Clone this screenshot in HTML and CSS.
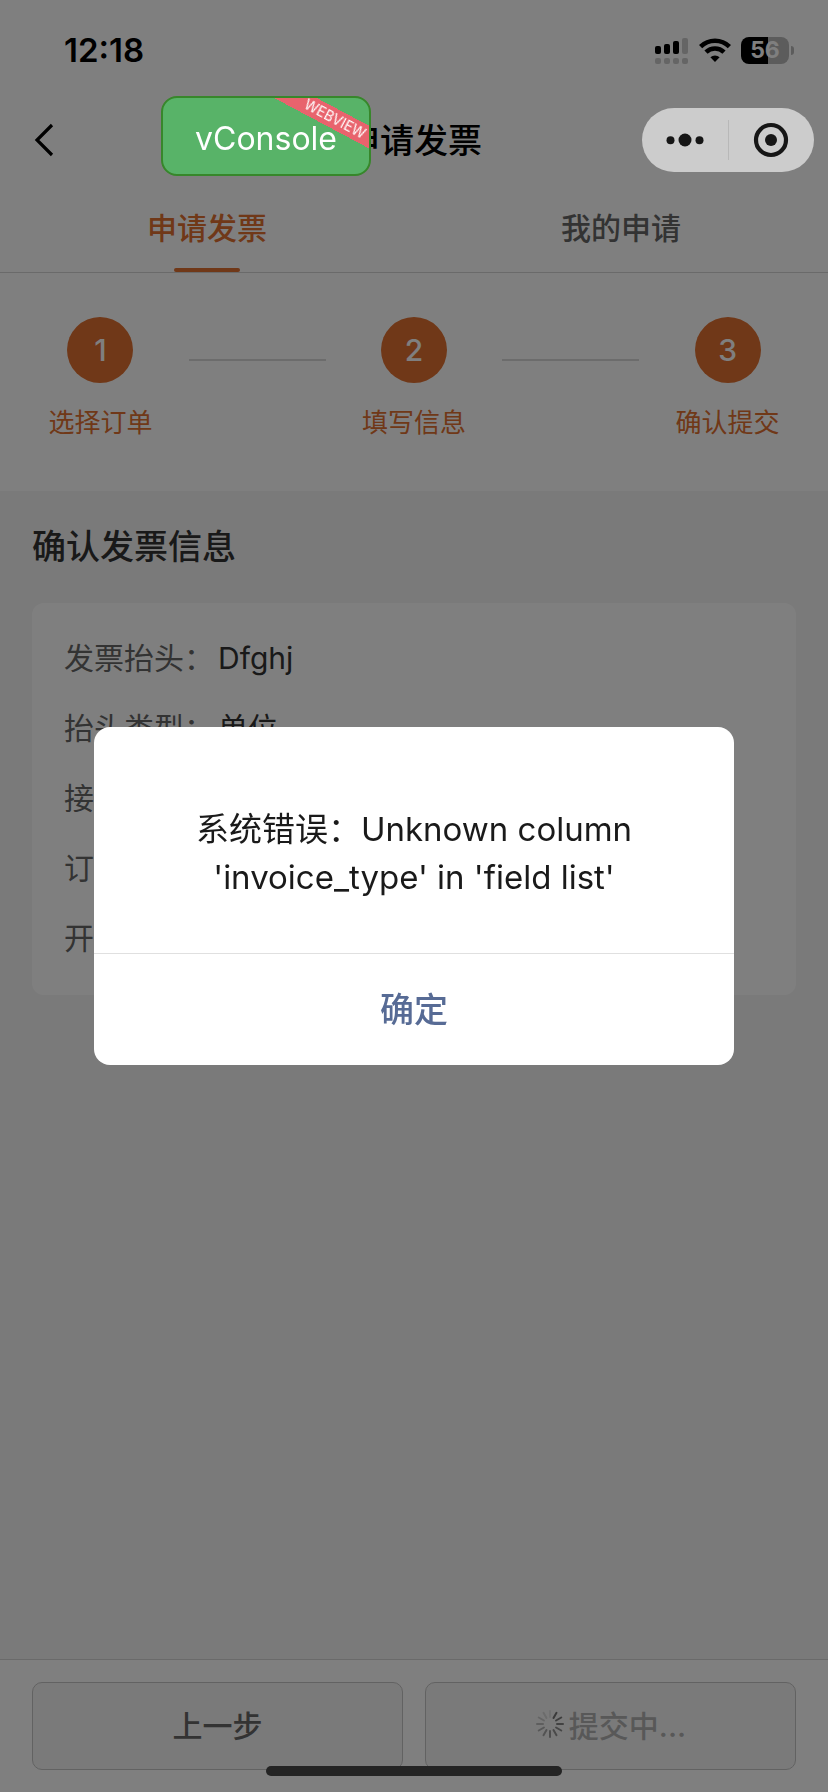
FILE: index.html
```html
<!DOCTYPE html>
<html lang="zh-CN">
<head>
    <meta charset="UTF-8">
    <meta name="viewport" content="width=device-width, initial-scale=1.0">
    <title>申请发票</title>
    <link rel="stylesheet" href="styles.css">
</head>

<body>
    <div class="page">
        <div class="status-bar">
            <span class="time">12:18</span>
            <div class="status-icons">
                <svg width="34" height="27" viewBox="0 0 34 27">
                    <rect x="0" y="9" width="6" height="8" rx="2" />
                    <rect x="9" y="7" width="6" height="10" rx="2" />
                    <rect x="18" y="4" width="6" height="13" rx="2" />
                    <g fill="#cacaca">
                        <rect x="27" y="1" width="6" height="16" rx="2" />
                        <rect x="0" y="21" width="6" height="6" rx="2" />
                        <rect x="9" y="21" width="6" height="6" rx="2" />
                        <rect x="18" y="21" width="6" height="6" rx="2" />
                        <rect x="27" y="21" width="6" height="6" rx="2" />
                    </g>
                </svg>
                <svg width="32" height="27" viewBox="0 0 32 27">
                    <g fill="none" stroke="#000" stroke-width="4.6">
                        <path d="M1.6 9.6a20.5 20.5 0 0 1 28.8 0" />
                        <path d="M7 15.2a12.9 12.9 0 0 1 18 0" />
                    </g>
                    <path d="M16 25l-4.6-4.7a6.6 6.6 0 0 1 9.2 0z" />
                </svg>
                <div class="battery"><span class="battery-level">56</span></div>
            </div>
        </div>

        <header class="nav">
            <button class="back" aria-label="返回">
                <svg width="20" height="34" viewBox="0 0 20 34">
                    <path d="M18 2L3 17l15 15" fill="none" stroke="#000" stroke-width="3.2" />
                </svg>
            </button>
            <h1>申请发票</h1>
            <div class="capsule">
                <button aria-label="更多">
                    <svg width="38" height="14" viewBox="0 0 38 14">
                        <circle cx="4.500" cy="7.300" r="4" />
                        <circle cx="19" cy="7" r="6.500" />
                        <circle cx="33.500" cy="7.300" r="4" />
                    </svg>
                </button>
                <button aria-label="关闭">
                    <svg width="36" height="36" viewBox="0 0 36 36">
                        <circle cx="18" cy="18" r="15" fill="none" stroke="#161616" stroke-width="4.200" />
                        <circle cx="18" cy="18" r="6" />
                    </svg>
                </button>
            </div>
        </header>

        <nav class="tabs">
            <a href="#apply" class="tab active">申请发票</a>
            <a href="#mine" class="tab">我的申请</a>
        </nav>

        <div class="steps">
            <div class="step">
                <span class="step-num">1</span>
                <span class="step-text">选择订单</span>
            </div>
            <div class="step-line"></div>
            <div class="step">
                <span class="step-num">2</span>
                <span class="step-text">填写信息</span>
            </div>
            <div class="step-line"></div>
            <div class="step">
                <span class="step-num">3</span>
                <span class="step-text">确认提交</span>
            </div>
        </div>

        <main class="content">
            <h2>确认发票信息</h2>
            <div class="card">
                <div class="row"><span class="label">发票抬头：</span><span>Dfghj</span></div>
                <div class="row"><span class="label">抬头类型：</span><span>单位</span></div>
                <div class="row"><span class="label">接</span></div>
                <div class="row"><span class="label">订</span></div>
                <div class="row"><span class="label">开</span></div>
            </div>
        </main>

        <footer class="actions">
            <button class="btn">上一步</button>
            <button class="btn loading" disabled>
                <svg class="spinner" width="30" height="30" viewBox="-15 -15 30 30" stroke="#8c8c8c" stroke-width="2" stroke-linecap="round">
                    <path d="M0-7V-13" transform="rotate(30)" stroke="#747474" />
                    <path d="M0-7V-13" transform="rotate(60)" stroke="#7c7c7c" />
                    <path d="M0-7V-13" transform="rotate(90)" stroke="#848484" />
                    <path d="M0-7V-13" transform="rotate(120)" />
                    <path d="M0-7V-13" transform="rotate(150)" stroke="#949494" />
                    <path d="M0-7V-13" transform="rotate(180)" stroke="#9c9c9c" />
                    <path d="M0-7V-13" transform="rotate(210)" stroke="#a6a6a6" />
                    <path d="M0-7V-13" transform="rotate(240)" stroke="#b0b0b0" />
                    <path d="M0-7V-13" transform="rotate(270)" stroke="#bcbcbc" />
                    <path d="M0-7V-13" transform="rotate(300)" stroke="#cacaca" />
                    <path d="M0-7V-13" transform="rotate(330)" stroke="#d8d8d8" />
                    <path d="M0-7V-13" stroke="#e2e2e2" />
                </svg>
                <span>提交中...</span>
            </button>
        </footer>
    </div>

    <div class="mask">
        <div class="dialog" role="alertdialog" aria-describedby="message">
            <p class="dialog-text" id="message">系统错误：Unknown column 'invoice_type' in 'field list'</p>
            <button class="dialog-btn">确定</button>
        </div>
    </div>

    <button class="vconsole">vConsole<span class="ribbon">WEBVIEW</span></button>
    <div class="home-bar"></div>
</body>

</html>
```

FILE: styles.css
```css
* {
    box-sizing: border-box;
}

body {
    margin: 0;
    font-family: Inter, "Noto Sans CJK SC", sans-serif;
    color: #333;
    background: #f5f5f5;
}

button {
    margin: 0;
    padding: 0;
    border: none;
    background: none;
    font-family: inherit;
    color: inherit;
}

svg {
    display: block;
}

.page {
    display: flex;
    flex-direction: column;
    min-height: 100vh;
}

/* top bars */
.status-bar {
    display: flex;
    justify-content: space-between;
    align-items: center;
    height: 100px;
    padding: 0 39px 0 64px;
    background: #fff;
}

.time {
    font-size: 33px;
    font-weight: 600;
    line-height: 40px;
    color: #000;
}

.status-icons {
    display: flex;
    align-items: center;
    gap: 10px;
}

.battery {
    position: relative;
    width: 48px;
    height: 27px;
    border-radius: 8px;
    background: linear-gradient(to right, #000 56%, #b8b8b8 56%);
    text-align: center;
}

.battery::after {
    content: "";
    position: absolute;
    top: 9px;
    right: -5px;
    width: 3px;
    height: 9px;
    border-radius: 0 4px 4px 0;
    background: #b8b8b8;
}

.battery-level {
    display: block;
    font-size: 23px;
    font-weight: 700;
    line-height: 27px;
    color: #fff;
}

.nav {
    display: grid;
    grid-template-columns: 1fr auto 1fr;
    align-items: center;
    height: 80px;
    padding: 0 14px 0 34px;
    background: #fff;
}

.nav h1 {
    margin: 0;
    padding: 0 20px 4px 0;
    font-size: 34px;
    font-weight: 500;
    color: #000;
}

.back {
    justify-self: start;
}

.capsule {
    position: relative;
    z-index: 20;
    justify-self: end;
    display: flex;
    width: 172px;
    height: 64px;
    border-radius: 32px;
    background: #ccc;
    fill: #161616;
}

.capsule button {
    flex: 1;
    display: flex;
    justify-content: center;
    align-items: center;
}

.capsule::before {
    content: "";
    position: absolute;
    top: 12px;
    left: 50%;
    width: 1px;
    height: 40px;
    background: #b8b8b8;
}

.tabs {
    display: flex;
    height: 93px;
    border-bottom: 1px solid #d4d4d4;
    background: #fff;
}

.tab {
    position: relative;
    flex: 1;
    font-size: 30px;
    font-weight: 500;
    line-height: 96px;
    text-align: center;
    text-decoration: none;
    color: #666;
}

.tab.active {
    color: #e07030;
}

.tab.active::after {
    content: "";
    position: absolute;
    bottom: 0;
    left: 50%;
    width: 66px;
    height: 4px;
    margin-left: -33px;
    border-radius: 2px;
    background: #e07030;
}

/* steps */
.steps {
    display: flex;
    gap: 20px;
    padding: 44px 32px 48px;
    background: #fff;
}

.step {
    flex: 1;
    display: flex;
    flex-direction: column;
    align-items: center;
    gap: 20px;
}

.step-num {
    width: 66px;
    height: 66px;
    border-radius: 50%;
    font-size: 30px;
    font-weight: 500;
    line-height: 66px;
    text-align: center;
    color: #fff;
    background: #e07030;
}

.step-text {
    font-size: 26px;
    line-height: 40px;
    color: #e07030;
}

.step-line {
    flex: 1;
    height: 2px;
    margin-top: 42px;
    background: #d8d8d8;
}

/* invoice info */
.content {
    flex: 1;
    padding: 32px;
}

.content h2 {
    margin: 0 0 32px;
    font-size: 34px;
    font-weight: 500;
    line-height: 48px;
}

.card {
    display: flex;
    flex-direction: column;
    gap: 24px;
    padding: 32px 32px 34px;
    border-radius: 12px;
    background: #fff;
}

.row {
    font-size: 30px;
    line-height: 46px;
    color: #333;
}

.label {
    margin-right: 4px;
    color: #666;
}

.actions {
    display: flex;
    gap: 22px;
    padding: 22px 32px;
    border-top: 1px solid #d4d4d4;
    background: #fff;
}

.btn {
    flex: 1;
    display: flex;
    justify-content: center;
    align-items: center;
    gap: 4px;
    height: 88px;
    padding-bottom: 4px;
    border: 1px solid #c4c4c4;
    border-radius: 10px;
    font-size: 30px;
    font-weight: 500;
    color: #666;
    background: #f5f5f5;
}

.btn.loading {
    color: #b0b0b0;
}

/* overlays */
.mask {
    position: fixed;
    inset: 0;
    z-index: 10;
    display: flex;
    justify-content: center;
    align-items: center;
    background: rgba(0, 0, 0, 0.5);
}

.dialog {
    width: 640px;
    max-width: 90%;
    border-radius: 16px;
    overflow: hidden;
    background: #fff;
}

.dialog-text {
    margin: 0;
    padding: 78px 48px 52px;
    font-size: 33px;
    line-height: 48px;
    text-align: center;
    color: #1a1a1a;
}

.dialog-btn {
    width: 100%;
    height: 112px;
    padding-bottom: 4px;
    border-top: 1px solid #e0e0e0;
    font-size: 34px;
    font-weight: 500;
    color: #576b95;
}

.vconsole {
    position: fixed;
    top: 96px;
    left: 161px;
    z-index: 30;
    width: 210px;
    height: 80px;
    padding-top: 4px;
    border: 2px solid #37872b;
    border-radius: 16px;
    overflow: hidden;
    font-size: 32px;
    color: #fff;
    background: #58b368;
}

.ribbon {
    position: absolute;
    top: 11px;
    right: -36px;
    width: 140px;
    font-size: 14px;
    line-height: 20px;
    text-align: center;
    color: #fff;
    background: #e8636d;
    transform: rotate(28deg);
}

.home-bar {
    position: fixed;
    bottom: 16px;
    left: 50%;
    z-index: 30;
    width: 296px;
    height: 10px;
    margin-left: -148px;
    border-radius: 5px;
    background: #242424;
}
```
